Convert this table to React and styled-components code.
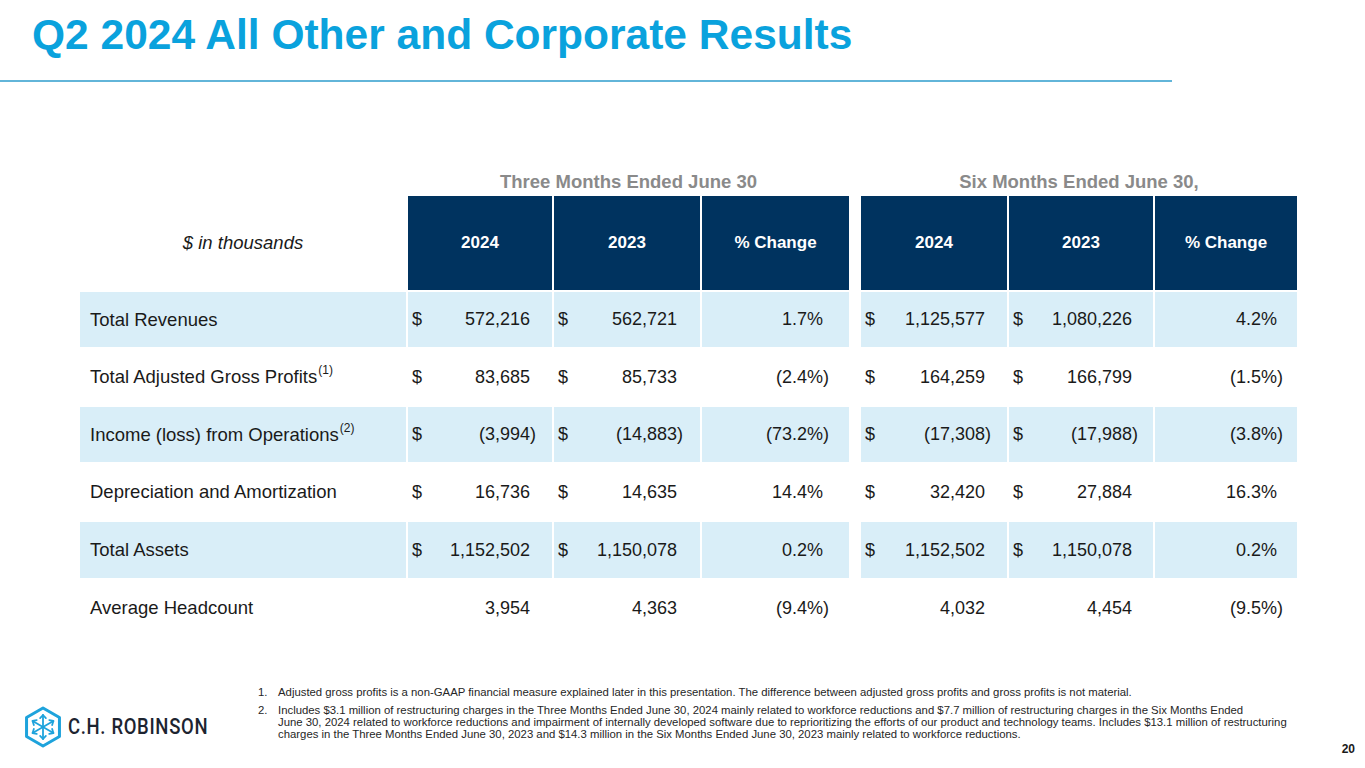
import React from 'react';
import styled, { createGlobalStyle } from 'styled-components';

const GlobalStyle = createGlobalStyle`
  html, body { margin: 0; padding: 0; background: #ffffff; }
  body { font-family: "Liberation Sans", Arial, sans-serif; }
`;

const Slide = styled.div`
  width: 1365px;
  height: 768px;
  display: flex;
  flex-direction: column;
  overflow: hidden;
  background: #ffffff;
`;

const Title = styled.h1`
  margin: 0;
  padding: 14px 0 0 32px;
  font-size: 42.5px;
  line-height: 42px;
  font-weight: 700;
  color: #0aa2dd;
`;

const Rule = styled.div`
  margin-top: 24px;
  width: 1172px;
  height: 2px;
  background: #62b5d9;
`;

const Table = styled.div`
  display: grid;
  grid-template-columns: 326px 144px 146px 147px 8px 146px 144px 142px;
  grid-template-rows: 24px 94px 55px 56px 55px 56px 56px 56px;
  column-gap: 2px;
  row-gap: 2px;
  margin: 88px 0 0 80px;
  font-size: 18px;
  color: #1a1a1a;
`;

const GroupHead = styled.div`
  grid-column: ${(p) => p.$span};
  display: flex;
  align-items: center;
  justify-content: center;
  font-size: 18.5px;
  font-weight: 700;
  color: #8a8a8a;
`;

const Blank = styled.div``;

const UnitsLabel = styled.div`
  display: flex;
  align-items: center;
  justify-content: center;
  font-style: italic;
  font-size: 18.5px;
`;

const HeadCell = styled.div`
  display: flex;
  align-items: center;
  justify-content: center;
  background: #00335f;
  color: #ffffff;
  font-size: 17px;
  font-weight: 700;
`;

const LabelCell = styled.div`
  display: flex;
  align-items: center;
  padding-left: 10px;
  font-size: 18.5px;
  background: ${(p) => (p.$shade ? '#d9eef8' : '#ffffff')};
`;

const ValueCell = styled.div`
  display: flex;
  align-items: center;
  justify-content: space-between;
  padding: 0 ${(p) => p.$pr}px 0 4px;
  background: ${(p) => (p.$shade ? '#d9eef8' : '#ffffff')};
`;

const Dollar = styled.span``;

const Num = styled.span`
  margin-left: auto;
  margin-right: ${(p) => (p.$neg ? '-6px' : '0')};
`;

const Sup = styled.span`
  font-size: 12px;
  position: relative;
  top: -7px;
  margin-left: 1px;
`;

const Footer = styled.footer`
  display: grid;
  grid-template-columns: 258px 1fr auto;
  min-height: 70px;
  margin-top: 50px;
`;

const Brand = styled.div`
  display: flex;
  align-items: center;
  gap: 6px;
  align-self: start;
  padding: 20px 0 0 24px;
`;

const BrandName = styled.span`
  display: inline-block;
  font-family: Roboto, "Liberation Sans", sans-serif;
  font-weight: 500;
  font-size: 22px;
  line-height: 24px;
  letter-spacing: 0.8px;
  color: #1d2430;
  transform: scaleX(0.84);
  transform-origin: left center;
  white-space: nowrap;
`;

const Notes = styled.ol`
  list-style: none;
  margin: 0;
  padding: 0;
  display: flex;
  flex-direction: column;
  gap: 6px;
  align-self: start;
  font-size: 11.35px;
  line-height: 12px;
  color: #262626;
`;

const Note = styled.li`
  display: grid;
  grid-template-columns: 20px 1fr;
`;

const NoteLine = styled.span`
  display: block;
  white-space: nowrap;
`;

const PageNum = styled.div`
  align-self: end;
  padding-right: 10px;
  font-size: 12px;
  line-height: 14px;
  font-weight: 700;
  color: #1a1a1a;
`;

const Logo = () => {
  const cx = 19;
  const cy = 21;
  const R = 19;
  const verts = [];
  for (let i = 0; i < 6; i++) {
    const a = (-90 + 60 * i) * (Math.PI / 180);
    verts.push([cx + R * Math.cos(a), cy + R * Math.sin(a)]);
  }
  const hex = verts.map((v) => v.join(',')).join(' ');
  const arrows = [];
  const L = 12;
  for (let i = 0; i < 6; i++) {
    const a = (-90 + 60 * i) * (Math.PI / 180);
    const ex = cx + L * Math.cos(a);
    const ey = cy + L * Math.sin(a);
    const h = 4.2;
    const b1 = a + Math.PI - 0.75;
    const b2 = a + Math.PI + 0.75;
    arrows.push(
      <g key={i}>
        <line x1={cx} y1={cy} x2={ex} y2={ey} />
        <polyline
          points={`${ex + h * Math.cos(b1)},${ey + h * Math.sin(b1)} ${ex},${ey} ${ex + h * Math.cos(b2)},${ey + h * Math.sin(b2)}`}
        />
      </g>
    );
  }
  return (
    <svg width="38" height="42" viewBox="0 0 38 42" fill="none" stroke="#1ea3dc" strokeLinecap="round" strokeLinejoin="round">
      <polygon points={hex} strokeWidth="3" />
      <g strokeWidth="1.8">{arrows}</g>
    </svg>
  );
};

const rows = [
  {
    label: 'Total Revenues',
    vals: [['$', '572,216'], ['$', '562,721'], '1.7%', ['$', '1,125,577'], ['$', '1,080,226'], '4.2%'],
  },
  {
    label: 'Total Adjusted Gross Profits',
    sup: '(1)',
    vals: [['$', '83,685'], ['$', '85,733'], '(2.4%)', ['$', '164,259'], ['$', '166,799'], '(1.5%)'],
  },
  {
    label: 'Income (loss) from Operations',
    sup: '(2)',
    vals: [['$', '(3,994)'], ['$', '(14,883)'], '(73.2%)', ['$', '(17,308)'], ['$', '(17,988)'], '(3.8%)'],
  },
  {
    label: 'Depreciation and Amortization',
    vals: [['$', '16,736'], ['$', '14,635'], '14.4%', ['$', '32,420'], ['$', '27,884'], '16.3%'],
  },
  {
    label: 'Total Assets',
    vals: [['$', '1,152,502'], ['$', '1,150,078'], '0.2%', ['$', '1,152,502'], ['$', '1,150,078'], '0.2%'],
  },
  {
    label: 'Average Headcount',
    vals: [['', '3,954'], ['', '4,363'], '(9.4%)', ['', '4,032'], ['', '4,454'], '(9.5%)'],
  },
];

const paddings = [22, 23, 26, 22, 21, 20];

const renderValue = (v, i, shade, key) => {
  const [sym, num] = Array.isArray(v) ? v : ['', v];
  const neg = num.startsWith('(');
  return (
    <ValueCell key={key} $shade={shade} $pr={paddings[i]}>
      {sym && <Dollar>{sym}</Dollar>}
      <Num $neg={neg}>{num}</Num>
    </ValueCell>
  );
};

export default function App() {
  return (
    <>
      <GlobalStyle />
      <Slide>
        <Title>Q2 2024 All Other and Corporate Results</Title>
        <Rule />
        <Table>
          <Blank />
          <GroupHead $span="2 / 5">Three Months Ended June 30</GroupHead>
          <Blank />
          <GroupHead $span="6 / 9">Six Months Ended June 30,</GroupHead>

          <UnitsLabel>$ in thousands</UnitsLabel>
          <HeadCell>2024</HeadCell>
          <HeadCell>2023</HeadCell>
          <HeadCell>% Change</HeadCell>
          <Blank />
          <HeadCell>2024</HeadCell>
          <HeadCell>2023</HeadCell>
          <HeadCell>% Change</HeadCell>

          {rows.map((r, ri) => {
            const shade = ri % 2 === 0;
            return (
              <React.Fragment key={r.label}>
                <LabelCell $shade={shade}>
                  {r.label}
                  {r.sup && <Sup>{r.sup}</Sup>}
                </LabelCell>
                {r.vals.slice(0, 3).map((v, i) => renderValue(v, i, shade, `a${i}`))}
                <Blank />
                {r.vals.slice(3).map((v, i) => renderValue(v, i + 3, shade, `b${i}`))}
              </React.Fragment>
            );
          })}
        </Table>

        <Footer>
          <Brand>
            <Logo />
            <BrandName>C.H. ROBINSON</BrandName>
          </Brand>
          <Notes>
            <Note>
              <span>1.</span>
              <NoteLine>
                Adjusted gross profits is a non-GAAP financial measure explained later in this presentation. The difference between adjusted gross profits and gross profits is not material.
              </NoteLine>
            </Note>
            <Note>
              <span>2.</span>
              <span>
                <NoteLine>
                  Includes $3.1 million of restructuring charges in the Three Months Ended June 30, 2024 mainly related to workforce reductions and $7.7 million of restructuring charges in the Six Months Ended
                </NoteLine>
                <NoteLine>
                  June 30, 2024 related to workforce reductions and impairment of internally developed software due to reprioritizing the efforts of our product and technology teams. Includes $13.1 million of restructuring
                </NoteLine>
                <NoteLine>
                  charges in the Three Months Ended June 30, 2023 and $14.3 million in the Six Months Ended June 30, 2023 mainly related to workforce reductions.
                </NoteLine>
              </span>
            </Note>
          </Notes>
          <PageNum>20</PageNum>
        </Footer>
      </Slide>
    </>
  );
}
